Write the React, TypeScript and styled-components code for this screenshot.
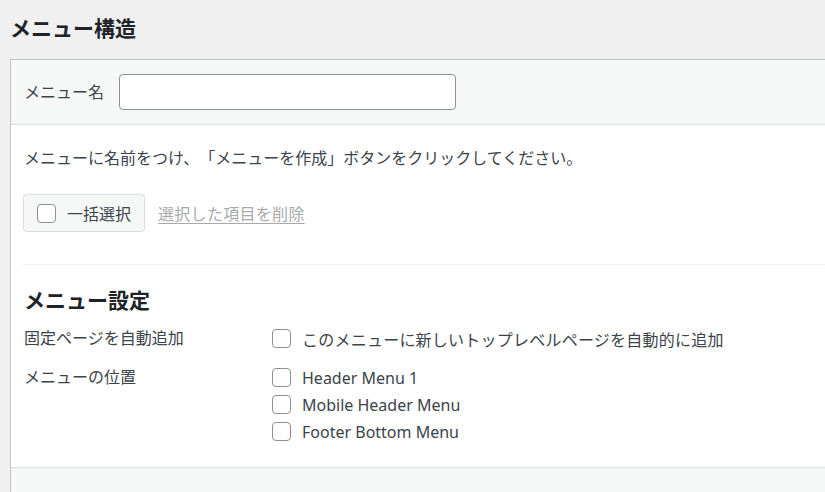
import styled, { createGlobalStyle } from "styled-components";

const GlobalStyle = createGlobalStyle`
  html, body {
    margin: 0;
    padding: 0;
    background-color: #f0f0f1;
    overflow: hidden;
  }
  body {
    font-family: "Noto Sans", "Noto Sans CJK JP", sans-serif;
    color: #3c434a;
    text-spacing-trim: space-all;
  }
`;

const Wrapper = styled.div`
  padding-left: 10px;
`;

const PageTitle = styled.h2`
  margin: 0 0 17px;
  padding: 14px 0 0;
  font-size: 21px;
  line-height: 28px;
  font-weight: 700;
  color: #1d2327;
`;

const Panel = styled.div`
  border: 1px solid #c3c4c7;
  border-right: none;
  background-color: #fff;
`;

const Header = styled.div`
  display: flex;
  align-items: center;
  gap: 15px;
  padding: 14px 13px;
  background-color: #f6f7f7;
  border-bottom: 1px solid #dcdcde;
`;

const Label = styled.label`
  font-size: 16px;
  line-height: 24px;
`;

const NameInput = styled.input`
  box-sizing: border-box;
  width: 337px;
  height: 36px;
  border: 1px solid #8c8f94;
  border-radius: 4px;
  background: #fff;
  font-size: 16px;
  padding: 0 8px;
  outline: none;
`;

const Body = styled.div`
  padding: 20px 0 22px 12px;
`;

const Intro = styled.p`
  margin: 0 0 25px 1px;
  font-family: "Noto Sans CJK JP", sans-serif;
  font-size: 16px;
  line-height: 24px;
`;

const BulkRow = styled.div`
  display: flex;
  align-items: center;
  gap: 13px;
  padding-bottom: 32px;
  border-bottom: 1px solid #f0f0f1;
`;

const BulkButton = styled.label`
  display: flex;
  align-items: center;
  gap: 11px;
  box-sizing: border-box;
  height: 38px;
  padding: 0 13px 0 13px;
  background-color: #f6f7f7;
  border: 1px solid #dcdcde;
  border-radius: 4px;
  font-size: 16px;
  color: #3c434a;
`;

const DeleteLink = styled.a`
  font-size: 16px;
  letter-spacing: 0.3px;
  color: #a7aaad;
  text-decoration: underline;
  text-underline-offset: 3px;
`;

const Check = styled.input.attrs({ type: "checkbox" })`
  appearance: none;
  box-sizing: border-box;
  margin: 0;
  width: 19px;
  height: 19px;
  flex: none;
  border: 1px solid #8c8f94;
  border-radius: 4px;
  background: #fff;
`;

const SectionTitle = styled.h3`
  margin: 21px 0 11px 1px;
  font-size: 21px;
  line-height: 28px;
  font-weight: 700;
  color: #1d2327;
`;

const SettingRow = styled.div<{ $gap?: number }>`
  display: grid;
  grid-template-columns: 249px 1fr;
  margin-bottom: ${(p) => p.$gap ?? 0}px;
`;

const SettingName = styled.div`
  padding-left: 1px;
  font-size: 16px;
  line-height: 27px;
`;

const Options = styled.div`
  display: flex;
  flex-direction: column;
`;

const Option = styled.label<{ $jp?: boolean }>`
  display: flex;
  align-items: center;
  gap: 11px;
  height: 27px;
  font-size: 16px;
  letter-spacing: ${(p) => (p.$jp ? "0.23px" : "0")};
  color: #3c434a;
`;

const Footer = styled.div`
  height: 40px;
  background-color: #f6f7f7;
  border-top: 1px solid #dcdcde;
`;

const locations = ["Header Menu 1", "Mobile Header Menu", "Footer Bottom Menu"];

export default function App() {
  return (
    <Wrapper>
      <GlobalStyle />
      <PageTitle>メニュー構造</PageTitle>
      <Panel>
        <Header>
          <Label>メニュー名</Label>
          <NameInput type="text" />
        </Header>
        <Body>
          <Intro>メニューに名前をつけ、「メニューを作成」ボタンをクリックしてください。</Intro>
          <BulkRow>
            <BulkButton>
              <Check />
              一括選択
            </BulkButton>
            <DeleteLink>選択した項目を削除</DeleteLink>
          </BulkRow>
          <SectionTitle>メニュー設定</SectionTitle>
          <SettingRow $gap={12}>
            <SettingName>固定ページを自動追加</SettingName>
            <Options>
              <Option $jp>
                <Check />
                このメニューに新しいトップレベルページを自動的に追加
              </Option>
            </Options>
          </SettingRow>
          <SettingRow>
            <SettingName>メニューの位置</SettingName>
            <Options>
              {locations.map((loc) => (
                <Option key={loc}>
                  <Check />
                  {loc}
                </Option>
              ))}
            </Options>
          </SettingRow>
        </Body>
        <Footer />
      </Panel>
    </Wrapper>
  );
}
